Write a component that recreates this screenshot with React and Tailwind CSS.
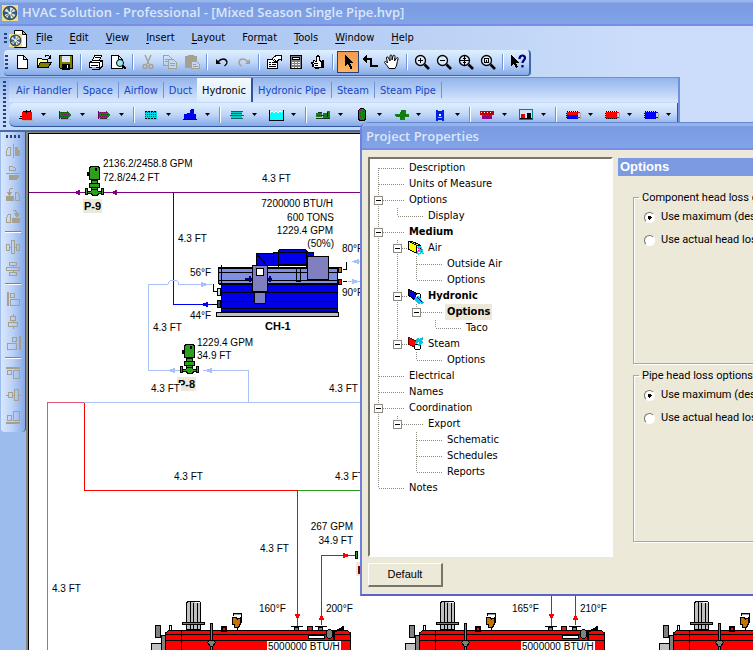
import React from "react";

const UI_FONT = "font-['DejaVu_Sans_Condensed','DejaVu_Sans',sans-serif]";

/* ---------- small drawings ---------- */

function Icon({ children, size = 16 }) {
  return (
    <svg width={size} height={size} viewBox="0 0 16 16" fill="none" stroke="#000" shapeRendering="crispEdges" aria-hidden="true">
      {children}
    </svg>
  );
}

function Magnifier({ children }) {
  return (
    <>
      <circle cx="6.5" cy="6.5" r="5" fill="#dbe9fd" strokeWidth="1.3" shapeRendering="auto" />
      <path d="M10.5 10.5l4.5 4.5" strokeWidth="2.6" shapeRendering="auto" />
      {children}
    </>
  );
}

const Q = "#a5a191";

const mainTools = [
  [
    ["New", <path d="M3.5 1.5h6l4 4v9h-10zM9.5 1.5v4h4" fill="#fff" />],
    ["Open", <><path d="M1.5 13.5v-9h4l1 1h5v3" fill="#ffff9c" /><path d="M1.5 13.5l3-5h11l-3.5 5z" fill="#808000" /><path d="M9 2.5c2-2 4-1 5 1M14.5 1v3h-3" /></>],
    ["Save", <><path d="M1.5 1.5h13v13h-12l-1-1z" fill="#808000" /><path d="M4 2h8v6H4z" fill="#dce8fa" stroke="none" /><path d="M4.5 10h7v5h-7z" fill="#000" /><path d="M9.5 11v3" stroke="#fff" /></>],
  ],
  [
    ["Print", <><path d="M4.5 6.5l2-5h7l-2 5" fill="#fff" /><path d="M1.5 8.5l3-2h10v5l-2 2h-11z" fill="#fff" /><path d="M1.5 8.5h10v5M11.5 8.5l3-2M3 11.5h7M6.5 3.5h5M3.5 15h8l3-3" /><path d="M4 13h4" stroke="#c8c000" /></>],
    ["Print preview", <><path d="M1.5 1.5h7l4 4v9h-11zM8.5 1.5v4h4" fill="#fff" /><circle cx="10" cy="9" r="3.5" fill="#9ceaf0" shapeRendering="auto" /><path d="M12.5 11.5l3 3.5" strokeWidth="2" /></>],
  ],
  [
    ["Cut", <g stroke={Q} strokeWidth="1.4" shapeRendering="auto"><path d="M5 1l4 9M11 1L7 10" /><circle cx="5" cy="12.5" r="2" /><circle cx="11" cy="12.5" r="2" /></g>],
    ["Copy", <g stroke={Q}><path d="M1.5 1.5h5l3 3v7h-8zM3 5.500h4M3 7.500h3" /><path d="M6.500 5.500h5l3 3v6h-8z" fill="#c2d7f8" /><path d="M8 9.500h5M8 11.500h5" /></g>],
    ["Paste", <g stroke={Q}><path d="M1.500 2.500h11v11h-11z" fill={Q} /><path d="M4.500 1.500h5v2h-5z" /><path d="M7.500 7.500h5l3 3v4h-8z" fill="#c2d7f8" /><path d="M9 10.500h3M9 12.500h5" /></g>],
  ],
  [
    ["Undo", <g shapeRendering="auto"><path d="M4 8c3-4 8-4 9 0c.3 2-1 3-2.500 4" strokeWidth="1.300" /><path d="M2 5v5h5z" fill="#000" stroke="none" /></g>],
    ["Redo", <g stroke={Q} shapeRendering="auto"><path d="M12 8c-3-4-8-4-9 0c-.3 2 1 3 2.500 4" strokeWidth="1.300" /><path d="M14 5v5H9z" fill={Q} stroke="none" /></g>],
  ],
  [
    ["Properties", <><path d="M1.500 5.500h10v9h-10z" fill="#fff" /><path d="M3 8.500h2M6 8.500h4M3 10.500h2M6 10.500h4M3 12.500h7" /><path d="M6 5l4-3.500h6v4h-3l-3 3z" fill="#fff" /><path d="M15.500 1v6M8 5l2 2" /></>],
    ["Calculator", <><path d="M2.500 1.500h11v13h-11z" fill="#808080" /><path d="M4.500 3.500h7v2h-7z" fill="#fff" /><path d="M4 8h2M7 8h2M10 8h2M4 10.500h2M7 10.500h2M10 10.500h2M4 13h2M7 13h2M10 13h2" stroke="#fff" /></>],
    ["Check", <g><path d="M3.500 6.500l3 1V3l1.500-1.500L9.500 3v3l2 2v5l-3 1h-3l-3-2 1-1-2-2 2-1z" fill="#fff" /><path d="M4 9.500h4M5 11.500h3M6 13.500h2" /><path d="M13 6v8M11 9.500h2" strokeWidth="2" /></g>],
  ],
  [
    ["Select", <path d="M5 1v11l3-2.500 2.500 5.500 2-1L10 9h4z" fill="#000" stroke="none" />],
    ["Connect", <><path d="M3 5h6v7h7" strokeWidth="2" /><path d="M0 5l5-4v8z" fill="#000" stroke="none" /></>],
    ["Pan", <path d="M5 14.500c-1-2-3-4-4.500-6 0-1.500 1.500-1.500 3 .5L2.500 4c0-1.500 1.500-1.500 2 0L6 7V2c.3-1.500 1.700-1.500 2 0v4l1-4c.5-1.200 2-1 2 .3L10.500 7 12.500 4c.7-1 2-.3 1.500 1-1 3-1 7-3 9.500z" fill="#fff" shapeRendering="auto" />],
  ],
  [
    ["Zoom in", <Magnifier><path d="M4 6.500h5M6.500 4v5" strokeWidth="1.600" /></Magnifier>],
    ["Zoom out", <Magnifier><path d="M4 6.500h5" strokeWidth="1.600" /></Magnifier>],
    ["Zoom to page", <Magnifier><path d="M2 6.500h9M6.500 2v9M5 4.500h3M5 8.500h3" /></Magnifier>],
    ["Zoom to selection", <Magnifier><path d="M4.500 4.500h4v4h-4zM6.500 5.500v2" /></Magnifier>],
  ],
  [
    ["Help pointer", <><path d="M1 1v11l2.500-2.500L6 14l2-1-2.500-4.500H9z" fill="#000" stroke="none" /><path d="M9.500 5c0-4.500 5.500-4.500 5.500-1 0 2-2.500 2.500-2.500 5M12.500 11v2.500" stroke="#000080" strokeWidth="2.200" shapeRendering="auto" /></>],
  ],
];

const coil = (a, b) => (
  <>
    <path d="M1.500 4.500h11v7h-11z" fill={a} stroke="none" />
    <path d="M1.500 8h11v3.500h-11z" fill={b} stroke="none" />
    <path d="M1.500 4.500h11v7h-11z" strokeDasharray="1 1" />
    <path d="M12 5.500h3M12 10.500h3" stroke={a} />
    <path d="M15.500 6v6" stroke="#b0a890" />
  </>
);

const inlinePump = (
  <>
    <path d="M2 5h9v6H2z" fill="#158015" stroke="none" />
    <path d="M10 4l4 4-4 4z" fill="#158015" stroke="none" />
    <path d="M2.500 4v8" stroke="#600060" />
    <path d="M4 5.500h7M5 7.500h8M4 9.500h7" stroke="#800060" strokeDasharray="1 1" />
    <path d="M3 12.500h11" stroke="#b0a890" />
    <path d="M4 11.500h7" stroke="#303030" />
  </>
);

const deviceTools = [
  [
    ["Boiler", <><path d="M4 5h10v8H4z" fill="#f00" stroke="none" /><path d="M5 4.500h7M8.500 3v3M1 11.500h3M2 9.500h2M12.500 3v2" /><path d="M5 13.500h10" stroke="#b0a890" /></>],
    ["Pump", inlinePump],
    ["Inline pump", inlinePump],
  ],
  [
    ["Heat exchanger", <><path d="M2 4h12v8H2z" fill="#00d8e8" stroke="none" /><path d="M2 5.500h12M2 7.500h12M2 9.500h12" stroke="#0050c0" strokeDasharray="1 1" /><path d="M2 4.500h12M2 11.500h12" strokeDasharray="2 1" /><path d="M3 12.500h12" stroke="#b0a890" /></>],
    ["Chiller", <><path d="M2 7h12v5H2zM8 3h4v4H8z" fill="#0000f0" stroke="none" /><path d="M3 8.500h11M2 10.500h12" stroke="#000060" strokeDasharray="1 1" /><path d="M9 2.500h3M1 12.500h14" stroke="#000060" /><path d="M5 6.500h3" stroke="#0000f0" /></>],
  ],
  [
    ["Cooling tower", <><path d="M2 4h11v8H2z" fill="#00d0c8" stroke="none" /><path d="M1.500 4.500h12M1 8.500h14M1.500 11.500h12M7.500 4v1M2 6.500h11" stroke="#006868" /></>],
    ["Tank", <><path d="M2 5h13v9H2z" fill="#0ff" stroke="none" /><path d="M1.500 3v10.500h14V3" /><path d="M2 5.500l2-1 2 1 2-1 2 1 2-1 2 1" stroke="#fff" /></>],
  ],
  [
    ["Base mounted pump", <><path d="M1 6h6v4H1zM8 6h4v5H8zM12 4h3v7h-3z" fill="#158015" stroke="none" /><path d="M1 11.500h14M6 8.500h3M3 5.500h4" stroke="#203020" /><path d="M12.500 5v5" stroke="#003000" /><path d="M2 8.500h3" stroke="#e00000" /></>],
    ["Separator", <><rect x="4.500" y="1.500" width="7" height="12" rx="3" fill="#108810" /><path d="M6.500 3v9M9.500 4v8" stroke="#a00080" strokeDasharray="1 2" /></>],
    ["Strainer", <><path d="M8 3h5v4h3v3h-4v3H7v-3H4l-3-2 2-1h4z" fill="#158015" stroke="none" /><path d="M8.500 4v8M10.500 4v8M4 8.500h10" stroke="#504020" strokeDasharray="1 1" /></>],
    ["Heater column", <><path d="M5 2.500v11M11 2.500v11M5 4.500h6M5 11.500h6" stroke="#0020e0" strokeWidth="2" /><circle cx="8" cy="8" r="2" fill="#fff" stroke="#0020e0" /></>],
  ],
  [
    ["Fan coil", <><path d="M1 4h14v4H1z" fill="#c00000" stroke="none" /><path d="M3 8h10v4H3z" fill="#900080" stroke="none" /><path d="M2 5.500h12" stroke="#fff" strokeDasharray="1 2" /><path d="M3 8.500h10" stroke="#f00" /></>],
    ["Assembly", <><path d="M1.500 2.500h13v10h-13z" fill="#cfe0fa" stroke="#008080" /><path d="M3 7h4v4H3z" fill="#e00000" stroke="none" /><path d="M9 6h4v6H9z" fill="#000" stroke="none" /><path d="M2 11.500h12" /></>],
  ],
  [
    ["Heating and cooling coil", coil("#f00", "#00f")],
    ["Heating coil", coil("#f00", "#f00")],
    ["Cooling coil", coil("#00f", "#00f")],
  ],
];

const alignTools = [
  [
    ["Flip horizontal", <><path d="M1.500 12.500v-5l2-3h2v8zM8 1v14" /><path d="M10.500 4.500h2v3h2v5h-4z" fill={Q} /></>],
    ["Flip vertical", <><path d="M4.500 5.500h6v-2l-3-2h-3zM1 8h14" /><path d="M4.500 10.500h9v2l-2 2h-7z" fill={Q} /></>],
    ["Rotate left", <><path d="M1.500 9.500h7v4h-7z" fill={Q} /><path d="M10.500 13.500v-8h2l2 3v5zM4 7V4c0-2 2-3 4-2" /><path d="M2 5h5L4.500 8z" fill={Q} /></>],
    ["Rotate right", <><path d="M7.500 9.500h7v4h-7z" fill={Q} /><path d="M1.500 13.500v-5l2-3h2v8zM8 2c3-1 4 1 4 3" /><path d="M9.500 4.500h5L12 8z" fill={Q} /></>],
  ],
  [
    ["Space across", <path d="M1.500 5.500h3v6h-3zM6.500 1.500h3v13h-3zM11.500 5.500h3v6h-3zM4 8h3M9 8h3" />],
    ["Space down", <path d="M4.500 1.500h7v3h-7zM1.500 6.500h13v3h-13zM4.500 11.500h7v3h-7zM8 4v3M8 9v3" />],
  ],
  [
    ["Align left", <path d="M3 1v14M5.500 2.500h4v4h-4zM5.500 8.500h9v6h-9zM2 1v14" />],
    ["Align centre", <path d="M5.500 3.500h5v4h-5zM3.500 9.500h9v4h-9zM8 1v2M8 7v3M8 14v2" />],
    ["Align right", <path d="M14 1v14M7.500 2.500h4v4h-4zM2.500 8.500h9v6h-9zM15 1v14" />],
  ],
  [
    ["Align top", <path d="M1 2h14M2.500 5.500h4v4h-4zM8.500 5.500h6v8h-6zM1 3h14" />],
    ["Align middle", <path d="M3.500 5.500h4v5h-4zM9.500 2.500h4v11h-4zM1 8h2M7 8h3M14 8h2" />],
    ["Align bottom", <path d="M1 14h14M2.500 6.500h4v5h-4zM8.500 2.500h6v9h-6zM1 13h14" />],
  ],
];

/* ---------- toolbars ---------- */

function VSep() {
  return <span className="mr-[3px] ml-[3px] h-4 w-[2px] shrink-0 border-l border-[#6f93d8] bg-white" />;
}

function Grip({ className }) {
  return <span className={"shrink-0 " + className} />;
}

const GRIP_V = "w-[3px] bg-[repeating-linear-gradient(180deg,#27417f_0_2px,transparent_2px_4px)]";

function MainToolbar() {
  return (
    <div className="ml-1 flex h-[26px] w-max items-center rounded-sm border-r-2 border-b border-[#3f66a8] bg-linear-to-b from-[#dff0fd] via-[#c0d6f9] to-[#84a9e6] pb-px pl-px">
      <Grip className={GRIP_V + " mr-[3px] h-[14px]"} />
      {mainTools.map((group, i) => (
        <React.Fragment key={i}>
          {i > 0 && <VSep />}
          {group.map(([name, art]) => (
            <button
              key={name}
              aria-label={name}
              className={
                "flex h-[22px] w-[22px] items-center justify-center " +
                (name === "Select" ? "border border-[#27417f] bg-linear-to-b from-[#f49a4f] to-[#fdb45f]" : "")
              }
            >
              <Icon>{art}</Icon>
            </button>
          ))}
        </React.Fragment>
      ))}
    </div>
  );
}

const tabs = ["Air Handler", "Space", "Airflow", "Duct", "Hydronic", "Hydronic Pipe", "Steam", "Steam Pipe"];

function DeviceDock() {
  return (
    <div className="mt-px flex w-[680px] border-t border-r-2 border-[#6f93d8] bg-linear-to-b from-[#8fb1ea] via-[#c6dafa] to-[#c2dbf8] pb-[3px]">
      <Grip className={GRIP_V + " mx-[3px] mt-[3px] h-[46px]"} />
      <div className="min-w-0 flex-1">
        <div className="flex h-6 items-center bg-linear-to-b from-[#93b4ec] to-[#d9e7fc] pl-[2px]" role="tablist">
          {tabs.map((t) => (
            <button
              key={t}
              role="tab"
              aria-selected={t === "Hydronic"}
              className={
                "flex items-center whitespace-nowrap px-[5px] text-[11px] leading-none " +
                (t === "Hydronic"
                  ? "h-full border-r-2 border-[#31549c] bg-linear-to-b from-[#f4f9ff] to-[#dcebfd] text-black"
                  : t === "Duct"
                    ? "h-4 text-[#1348c4]"
                    : "h-4 border-r border-[#6f93d8] text-[#1348c4]")
              }
            >
              {t}
            </button>
          ))}
        </div>
        <div className="mt-px flex h-6 items-center rounded-l-md border-r border-b border-[#31549c] bg-linear-to-b from-[#dff0fd] via-[#c0d6f9] to-[#84a9e6] pl-1">
          {deviceTools.map((group, i) => (
            <React.Fragment key={i}>
              {i > 0 && <VSep />}
              {group.map(([name, art]) => (
                <button key={name} aria-label={name} className="flex h-5 w-[39px] shrink-0 items-center pl-[5px]">
                  <Icon>{art}</Icon>
                  <svg width="5" height="3" className="ml-[7px]" aria-hidden="true">
                    <path d="M0 0h5L2.500 3z" />
                  </svg>
                </button>
              ))}
            </React.Fragment>
          ))}
        </div>
      </div>
    </div>
  );
}

function AlignToolbar() {
  return (
    <div className="ml-px flex h-[300px] w-[25px] flex-col items-center rounded-b-sm border-r border-[#31549c] bg-linear-to-r from-[#dbe8fc] via-[#b9d0f6] to-[#86a9e6] pt-[3px]">
      <span className="mb-[2px] h-[3px] w-[15px] bg-[repeating-linear-gradient(90deg,#27417f_0_2px,transparent_2px_4px)]" />
      {alignTools.map((group, i) => (
        <React.Fragment key={i}>
          {i > 0 && <span className="my-[3px] h-[2px] w-4 border-t border-[#5f86d4] bg-white" />}
          {group.map(([name, art]) => (
            <button key={name} aria-label={name} className="flex h-[22px] w-[22px] items-center justify-center">
              <Icon><g stroke={Q}>{art}</g></Icon>
            </button>
          ))}
        </React.Fragment>
      ))}
    </div>
  );
}

/* ---------- piping diagram ---------- */

function Pump() {
  return (
    <g fill="#2ca01c" stroke="#000">
      <path d="M89.500 167.500l2-1h6l2 1v12h-10z" />
      <path d="M87 172h2v4h-2zM95 168h2v3h-2z" fill="#000" stroke="none" />
      <path d="M91.500 180.500h6v3h-6zM89.500 183.500h10v4h-10zM91.500 187.500h6v3h-6z" />
      <path d="M87.500 191.500h3l2-2h4l2 2h3v2h-3l-1 2h-5l-1-2h-4z" />
      <path d="M85.500 188.500h2v6h-2zM101.500 188.500h2v6h-2z" />
    </g>
  );
}

function Chiller() {
  return (
    <g stroke="#000">
      <path d="M216.500 312.500h122v4h-122z" fill="#c0c0c0" />
      <path d="M221.500 284.500h116v27h-116z" fill="#0000e8" />
      <path d="M221 292.500h117M221 301.500h117M221 308.500h117M219 284h119" />
      <path d="M218.500 267.500h119v16h-119z" fill="#7f90e4" />
      <path d="M219 268h119M219 283.500h119" strokeWidth="2" />
      <path d="M219 272.500h119M219 280.500h119M221.500 265v19" />
      <path d="M296.500 269v12M300.500 269v12M296 281.500h5" />
      <path d="M256.500 253.500h17v12h-17zM256.500 253.500l10 12" fill="#0000e8" />
      <path d="M273.500 252.500h4l2-3h26l3 3h5v13h-40z" fill="#0000f0" />
      <path d="M278.500 250v17M306.500 250v17M278 252.500h28M278 264.500h28" />
      <path d="M307.500 256.500h21v23h-21z" fill="#8080c0" />
      <path d="M245 278.500h27M250 276v6M269.500 276v6" stroke="#000080" strokeWidth="2" />
      <path d="M252.500 265.500h15v26h-15zM254.500 292.500h11v11h-11z" fill="#8080c0" />
      <path d="M256.500 268.500h7v7h-7z" fill="#fff" />
      <path d="M217.500 288.500h3v7h-3z" fill="#c4e4d0" />
      <path d="M217.500 300.500h3v7h-3z" fill="#304870" />
      <path d="M338.500 267.500h3v5h-3z" fill="#c87000" />
      <path d="M338.500 279.500h3v5h-3z" fill="#f00" />
      <path d="M212.500 284.500h1v7h4M212 304.500h5M343 269.500h3v-8M343 281.500h4" fill="none" />
    </g>
  );
}

function Boiler({ x }) {
  return (
    <g transform={`translate(${x} 0)`} stroke="#000">
      <path d="M151.500 643.500h10v8h-10z" fill="#c0c0c0" />
      <path d="M161.500 635.500h5v20h-5zM155.500 625.500h5v12h-5z" fill="#808080" />
      <path d="M165.500 660v-27l3-2.500h179l3 2.500v27z" fill="#f00" />
      <path d="M166 634.500h184M166 640.500h184M181.500 631v30" />
      <path d="M169.500 625.500h2v5h-2z" fill="#fff" />
      <path d="M186.500 602.500l2-1h11l1 1v27h-14z" fill="#c0c0c0" />
      <path d="M190.500 602v27M193.500 603v26M197.500 603v26" />
      <path d="M195 602.500h5" stroke="#fff" />
      <path d="M182.500 622.500h22v2h-22z" fill="#808080" />
      <path d="M210.500 623.500h2v30h-2z" fill="#808080" />
      <path d="M207.500 642.500l2-2.500h4l2 2.500-3 4h-2z" fill="#808080" />
      <path d="M221.500 626.500h4v4h-4z" fill="#e02020" strokeWidth="2" />
      <path d="M233.500 616v-2.500h8v9" fill="none" strokeWidth="1" />
      <path d="M234 614.500h7" stroke="#999" />
      <path d="M232.500 617.500h4l1 2 3-2v6l-2 4h-4v-3h-2z" fill="#c87000" />
      <path d="M237.500 628v2M291 626.500h12M315 626.500h12" />
      <path d="M294.500 627.500h4v3h-4zM318.500 627.500h4v3h-4z" fill="#808080" />
      <path d="M307.500 626.500h5v4h-5z" fill="#e02020" strokeWidth="1" />
      <path d="M308.500 635.500h16v3h-16z" fill="#fff" />
      <path d="M333.500 642v-10l9-4M342.500 626v4" fill="none" strokeWidth="2" />
      <ellipse cx="329.500" cy="634" rx="3.500" ry="4.500" fill="#808080" />
      <path d="M267 641h74v20h-74z" fill="#fff" stroke="none" />
      <text x="268" y="650" stroke="none" fill="#000">5000000 BTU/H</text>
    </g>
  );
}

const labels = [
  [103, 167, "2136.2/2458.8 GPM"],
  [103, 181, "72.8/24.2 FT"],
  [262, 182, "4.3 FT"],
  [333, 207, "7200000 BTU/H", "end"],
  [334, 221, "600 TONS", "end"],
  [333, 234, "1229.4 GPM", "end"],
  [334, 247, "(50%)", "end"],
  [342, 252, "80°F"],
  [342, 296, "90°F"],
  [190, 276, "56°F"],
  [190, 319, "44°F"],
  [178, 242, "4.3 FT"],
  [153, 331, "4.3 FT"],
  [197, 346, "1229.4 GPM"],
  [197, 359, "34.9 FT"],
  [329, 392, "4.3 FT"],
  [174, 480, "4.3 FT"],
  [335, 480, "4.3 FT"],
  [353, 530, "267 GPM", "end"],
  [353, 544, "34.9 FT", "end"],
  [260, 552, "4.3 FT"],
  [259, 612, "160°F"],
  [326, 612, "200°F"],
  [512, 612, "165°F"],
  [580, 612, "210°F"],
  [52, 592, "4.3 FT"],
];

function Diagram() {
  return (
    <svg className="block h-full w-full font-['Liberation_Sans',Arial,sans-serif] text-[10px]" shapeRendering="crispEdges" role="img" aria-label="Piping schematic">
      <g transform="translate(-29 -134)">
        <g fill="none">
          <path d="M29 192.500H86M103 192.500h300" stroke="#800080" />
          <path d="M173.500 193v111.500H212" stroke="#0000f0" />
          <path d="M248.500 402V370.500H203M181 370.500H148.500V284.500H168c1-6 10-6 11 0H212M84 402.500h300M354 261.500h30M348 281.500h30" stroke="#a9c1f3" />
          <path d="M47.500 660V402.500H84" stroke="#dc5a70" />
          <path d="M84.500 403v87.500H297.500V627M321.500 625V555.500H356M551.500 560v67M575.500 560v65" stroke="#f00" />
          <path d="M298 490.500h100" stroke="#2ca01c" />
        </g>
        <g stroke="none">
          <path d="M74 192.500l6-3v6zM111 192.500l6-3v6z" fill="#800080" />
          <path d="M201 304.500l7-3v6z" fill="#0000f0" />
          <path d="M208 284.500l-7-3v6zM168 370.500l7-3v6zM205 370.500l7-3v6zM352 261.500l7-3v6zM359 281.500l-7-3v6z" fill="#a9c1f3" />
          <path d="M297.500 620l-3-6h6zM321.500 614l-3 6h6zM551.500 620l-3-6h6zM575.500 614l-3 6h6zM350 555.500l-7-3v6z" fill="#f00" />
          <path d="M83 199h19v14H83zM177 377h19v14h-19zM356 562h6v14h-6z" fill="#ece9d8" />
          <path d="M358 566h3v8h-3z" fill="#800000" />
        </g>
        <path d="M355.500 551.500h2v7h-2z" fill="#2ca01c" stroke="#000" />
        <Pump />
        <g transform="translate(95 178)"><Pump /></g>
        <Chiller />
        <g className="text-[11px] font-bold">
          <text x="84" y="210">P-9</text>
          <text x="178" y="388">P-8</text>
          <text x="265" y="330">CH-1</text>
        </g>
        <path d="M150 383h31v10h-31z" fill="#fff" />
        <text x="151" y="392">4.3 FT</text>
        {labels.map(([x, y, t, a], i) => (
          <text key={i} x={x} y={y} textAnchor={a || "start"}>{t}</text>
        ))}
        <Boiler x={0} />
        <Boiler x={254} />
        <Boiler x={508} />
      </g>
    </svg>
  );
}

/* ---------- Project Properties dialog ---------- */

const mediumIcons = {
  air: <><path d="M0 1l8 4v8L0 9z" fill="#ff0" /><path d="M0 1h3l9 4H8z" fill="#ff0" /><path d="M8.500 5.500h4v8h-4z" fill="#fff" /><path d="M9 8c3-3 6 1 5 3s-4 4-5 2M11 8l4 6M9 12l6-2" stroke="#00d8e0" strokeWidth="1.500" /><path d="M10 8v4M13 9v4" stroke="#e000c0" strokeDasharray="1 1" /></>,
  water: <><path d="M0 1l8 4 4 2-5 5L0 7z" fill="#0000e0" /><circle cx="10" cy="8" r="2.500" fill="#fff" /><path d="M8 9l6 7M10 8l5 7M7 11l5 5" stroke="#00c8f0" strokeWidth="1.500" /><path d="M9 9l5 5" stroke="#000080" /></>,
  steam: <><path d="M0 1l8 4v7L0 8z" fill="#f00" stroke="#600000" /><circle cx="9.500" cy="11" r="3" fill="#fff" /><path d="M8 8l2-6M11 10l3-8M9 6l6-4M10 9l5-3" stroke="#00c8e0" strokeWidth="2" /></>,
};

/* guides: F first, T tee, L last, B box with line on, E box at the end, | line, . blank */
const tree = [
  ["F", "Description"],
  ["T", "Units of Measure"],
  ["B", "Options"],
  ["|L", "Display"],
  ["B", "Medium", { bold: true }],
  ["|B", "Air", { icon: "air" }],
  ["||T", "Outside Air"],
  ["||L", "Options"],
  ["|B", "Hydronic", { icon: "water", bold: true }],
  ["||E", "Options", { bold: true, selected: true }],
  ["||.L", "Taco"],
  ["|E", "Steam", { icon: "steam" }],
  ["|.L", "Options"],
  ["T", "Electrical"],
  ["T", "Names"],
  ["B", "Coordination"],
  ["|E", "Export"],
  ["|.T", "Schematic"],
  ["|.T", "Schedules"],
  ["|.L", "Reports"],
  ["L", "Notes"],
];

function Guide({ kind }) {
  const box = kind === "B" || kind === "E";
  const up = "TLBE|".includes(kind);
  const down = "FTB|".includes(kind);
  return (
    <svg width="19" height="16" className="shrink-0" shapeRendering="crispEdges" fill="none" stroke="#8c8a80" aria-hidden="true">
      {up && <path d="M8.500 0v8" strokeDasharray="1 1" />}
      {down && <path d="M8.500 8v8" strokeDasharray="1 1" />}
      {"FTLBE".includes(kind) && <path d="M9 8.500h10" strokeDasharray="1 1" />}
      {box && <path d="M4.500 4.500h8v8h-8z" fill="#fff" />}
      {box && <path d="M6 8.500h5" stroke="#000" />}
    </svg>
  );
}

function TreeRow({ guides, label, opts = {} }) {
  return (
    <li className="flex h-4 items-center" role="treeitem" aria-selected={!!opts.selected}>
      {guides.split("").map((k, i) => <Guide key={i} kind={k} />)}
      {opts.icon ? (
        <span className="w-[18px] shrink-0"><Icon>{mediumIcons[opts.icon]}</Icon></span>
      ) : (
        <svg width="18" height="16" className="shrink-0" shapeRendering="crispEdges" aria-hidden="true">
          <path d="M0 8.500h16" stroke="#8c8a80" strokeDasharray="1 1" />
        </svg>
      )}
      <span
        className={
          "h-4 px-[2px] whitespace-nowrap leading-4 " +
          (opts.bold ? "font-bold " : "") +
          (opts.selected ? "bg-[#ece9d8]" : "")
        }
      >
        {label}
      </span>
    </li>
  );
}

function HeadLossGroup({ title, name }) {
  const radio =
    "m-0 h-[11px] w-[11px] shrink-0 appearance-none rounded-full border border-t-[#77756a] border-r-white border-b-white border-l-[#77756a] bg-white checked:bg-[radial-gradient(circle,#000_0_2px,#fff_2px)]";
  return (
    <fieldset className="h-[173px] w-[300px] border border-[#aca899] shadow-[1px_1px_0_#fff,inset_1px_1px_0_#fff]">
      <legend className="ml-[5px] px-[3px] leading-[13px] whitespace-nowrap">{title}</legend>
      <div className="flex flex-col gap-[7px] pt-[5px] pl-[10px] whitespace-nowrap">
        <label className="flex h-4 items-center gap-[6px]">
          <input type="radio" name={name} defaultChecked className={radio} />
          Use maximum (design) head loss
        </label>
        <label className="flex h-4 items-center gap-[6px]">
          <input type="radio" name={name} className={radio} />
          Use actual head loss
        </label>
      </div>
    </fieldset>
  );
}

function Dialog() {
  return (
    <section
      role="dialog"
      aria-label="Project Properties"
      className="absolute top-[122px] right-0 left-[360px] flex h-[474px] flex-col overflow-hidden rounded-tl-lg border-b-2 border-l-2 border-b-[#5a64c8] border-l-[#6f7fdc] bg-[#ece9d8]"
    >
      <h2 className="flex h-7 shrink-0 items-center border-t border-b-2 border-t-[#6487d0] border-b-[#7b8be8] bg-linear-to-b from-[#93b3ea] from-10% via-[#7b9ae2] via-15% to-[#80a5e7] pt-[3px] pl-1 font-['Open_Sans','Noto_Sans',sans-serif] text-[13px] font-semibold text-[#dbe6fb]">
        Project Properties
      </h2>
      <div className="flex min-h-0 flex-1 gap-[5px] pt-[7px] pl-[6px]">
        <div className="flex w-[245px] shrink-0 flex-col items-start">
          <ul role="tree" className={"h-[400px] w-full border-2 border-t-[#77756a] border-r-white border-b-white border-l-[#77756a] bg-white pt-px text-[11px] " + UI_FONT}>
            {tree.map(([g, t, o], i) => <TreeRow key={i} guides={g} label={t} opts={o} />)}
          </ul>
          <button className="mt-[6px] h-6 w-[75px] border-t border-r-2 border-b-2 border-l border-t-white border-r-[#77756a] border-b-[#77756a] border-l-white font-['Liberation_Sans',Arial,sans-serif] text-[11px]">
            Default
          </button>
        </div>
        <div className="min-w-0 flex-1 font-['Roboto','Liberation_Sans',sans-serif] text-[11px]">
          <h3 className="mt-px h-[18px] bg-[#7b9ae2] pl-[2px] font-['Liberation_Sans',Arial,sans-serif] text-[13px] leading-[18px] font-bold text-white">
            Options
          </h3>
          <div className="flex flex-col gap-[5px] pt-[15px] pl-[15px]">
            <HeadLossGroup title="Component head loss options" name="component" />
            <HeadLossGroup title="Pipe head loss options" name="pipe" />
          </div>
        </div>
      </div>
    </section>
  );
}

/* ---------- application window ---------- */

const menus = ["File", "Edit", "View", "Insert", "Layout", "Format", "Tools", "Window", "Help"];

function AppLogo({ size }) {
  return (
    <svg width={size} height={size} viewBox="0 0 16 16" aria-hidden="true">
      <rect width="16" height="16" fill="#efe08a" />
      <circle cx="8" cy="8" r="6.500" fill="#dfe8ea" stroke="#3a4a50" strokeWidth="1.500" />
      <path d="M8 8L4 2.500l4-1zM8 8l6-2 .5 4zM8 8l1 6.500-4-1zM8 8L2 10l0-4z" fill="#2f5f86" />
      <path d="M8 8l4-5M8 8l4 5M8 8l-5 4" stroke="#6a6030" />
      <circle cx="8" cy="8" r="1.500" fill="#fff" />
    </svg>
  );
}

export default function App() {
  return (
    <div className={"relative flex h-screen flex-col overflow-hidden bg-[#9dbcee] text-[11px] text-black " + UI_FONT}>
      <header className="flex h-[26px] shrink-0 items-center gap-[4px] border-b-2 border-[#7b8be8] bg-linear-to-b from-[#98b8ee] from-5% via-[#7b9ae2] via-15% to-[#80a5e7] pt-[2px] pl-[2px]">
        <AppLogo size={16} />
        <h1 className="font-['Open_Sans','Noto_Sans',sans-serif] text-[13px] font-semibold whitespace-nowrap text-[#dbe6fb]">
          HVAC Solution - Professional - [Mixed Season Single Pipe.hvp]
        </h1>
      </header>
      <div className="shrink-0 bg-linear-to-r from-[#9dbcf0] via-[#bdd3f6] via-60% to-[#cbddfa] to-85%">
        <nav className="flex h-6 items-center pt-px pl-1">
          <Grip className={GRIP_V + " h-3"} />
          <span className="flex w-5 justify-center pl-[2px]">
            <svg width="19" height="20" aria-hidden="true">
              <path d="M5.500 1.500h8l4 4v13h-12zM13.500 1.500v4h4" fill="#fff" stroke="#000" />
              <g transform="translate(0 5)"><AppLogo size={13} /></g>
            </svg>
          </span>
          {menus.map((m) => (
            <button key={m} className="pr-2 pl-[9px] whitespace-nowrap">
              <span className="underline underline-offset-2">{m === "Format" ? "" : m[0]}</span>
              {m === "Format" ? <>For<span className="underline underline-offset-2">m</span>at</> : m.slice(1)}
            </button>
          ))}
        </nav>
        <MainToolbar />
        <DeviceDock />
      </div>
      <main className="flex min-h-0 flex-1 border-t-2 border-[#4a6aa8]">
        <AlignToolbar />
        <div className="min-w-0 flex-1 border-t border-l-2 border-[#8a887c]">
          <div className="h-full border-t border-l border-black bg-white">
            <Diagram />
          </div>
        </div>
      </main>
      <Dialog />
    </div>
  );
}
